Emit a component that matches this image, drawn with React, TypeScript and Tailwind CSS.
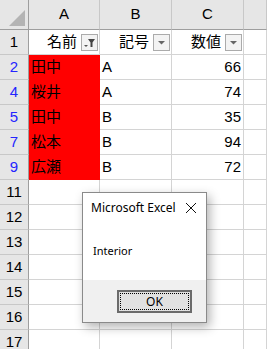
import React from "react";

const rows = [
  { n: "2", name: "田中", code: "A", val: "66" },
  { n: "4", name: "桜井", code: "A", val: "74" },
  { n: "5", name: "田中", code: "B", val: "35" },
  { n: "7", name: "松本", code: "B", val: "94" },
  { n: "9", name: "広瀬", code: "B", val: "72" },
];
const empty = ["11", "12", "13", "14", "15", "16", "17"];

const FilterButton = ({ active }: { active?: boolean }) => (
  <div className="w-[17px] h-[17px] border border-[#ababab] bg-[#f3f3f3] flex items-center justify-center shrink-0">
    {active ? (
      <svg width="13" height="11" viewBox="0 0 13 11">
        <path d="M1 8h4l-2 2z" fill="#555" />
        <path d="M5 2h7l-2.5 3.5V10H7.5V5.5z" fill="#444" />
      </svg>
    ) : (
      <svg width="9" height="5" viewBox="0 0 9 5">
        <path d="M1 1h7l-3.5 3.5z" fill="#666" />
      </svg>
    )}
  </div>
);

const rowHead = "bg-[#e6e6e6] border-r border-r-[#9e9e9e] border-b border-b-[#c8c8c8] flex items-center justify-center";
const cell = "border-r border-b border-[#d4d4d4] flex items-center";

export default function App() {
  return (
    <div className="relative w-[267px] h-[349px] overflow-hidden bg-white" style={{ fontFamily: '"Liberation Sans", "Noto Sans CJK JP", sans-serif' }}>
      <div className="grid grid-cols-[29px_71px_72px_72px_1fr] grid-rows-[30px_repeat(13,25px)] text-[15px] text-black">
        {/* column headers */}
        <div className="bg-[#e6e6e6] border-r border-b border-[#9e9e9e] relative">
          <svg className="absolute left-[8px] top-[10px]" width="18" height="17" viewBox="0 0 18 17">
            <path d="M17 0V16H1z" fill="#b4b4b4" />
          </svg>
        </div>
        {["A", "B", "C", ""].map((c, i) => (
          <div key={i} className="bg-[#e6e6e6] border-r border-r-[#c8c8c8] border-b border-b-[#9e9e9e] flex items-center justify-center">
            {c}
          </div>
        ))}

        {/* row 1 */}
        <div className={rowHead}>1</div>
        <div className={`${cell} justify-end gap-[4px] pr-[1px]`}>
          <span>名前</span>
          <FilterButton active />
        </div>
        <div className={`${cell} justify-end gap-[4px] pr-[1px]`}>
          <span>記号</span>
          <FilterButton />
        </div>
        <div className={`${cell} justify-end gap-[4px] pr-[1px]`}>
          <span>数値</span>
          <FilterButton />
        </div>
        <div className={cell} />

        {rows.map((r) => (
          <React.Fragment key={r.n}>
            <div className={`${rowHead} text-[#2424ff]`}>{r.n}</div>
            <div className="bg-[#ff0000] border-b border-[#ff0000] flex items-center pl-[2px]">{r.name}</div>
            <div className={`${cell} pl-[2px]`}>{r.code}</div>
            <div className={`${cell} justify-end pr-[2px]`}>{r.val}</div>
            <div className={cell} />
          </React.Fragment>
        ))}

        {empty.map((n) => (
          <React.Fragment key={n}>
            <div className={rowHead}>{n}</div>
            <div className={cell} />
            <div className={cell} />
            <div className={cell} />
            <div className={cell} />
          </React.Fragment>
        ))}
      </div>

      {/* message box */}
      <div
        className="absolute left-[82px] top-[192px] w-[125px] h-[131px] border border-[#8a8a8a] bg-white flex flex-col shadow-[3px_4px_10px_rgba(0,0,0,0.3)]"
        style={{ fontFamily: '"Noto Sans", "Liberation Sans", sans-serif' }}
      >
        <div className="h-[30px] flex items-center justify-between pl-[8px] pr-[9px] text-[12px] text-black">
          <span>Microsoft Excel</span>
          <svg width="12" height="12" viewBox="0 0 12 12">
            <path d="M1 1l10 10M11 1L1 11" stroke="#111" strokeWidth="1" />
          </svg>
        </div>
        <div className="h-[57px] flex items-center pl-[10px] text-[11px] text-black">Interior</div>
        <div className="flex-1 bg-[#f0f0f0] flex justify-end pt-[10px] pr-[14px]">
          <div className="w-[75px] h-[23px] border-2 border-[#6b6b6b] bg-[#e1e1e1] p-[1px]">
            <div className="w-full h-full border border-dotted border-black flex items-center justify-center text-[12px] text-black">
              OK
            </div>
          </div>
        </div>
      </div>
    </div>
  );
}
